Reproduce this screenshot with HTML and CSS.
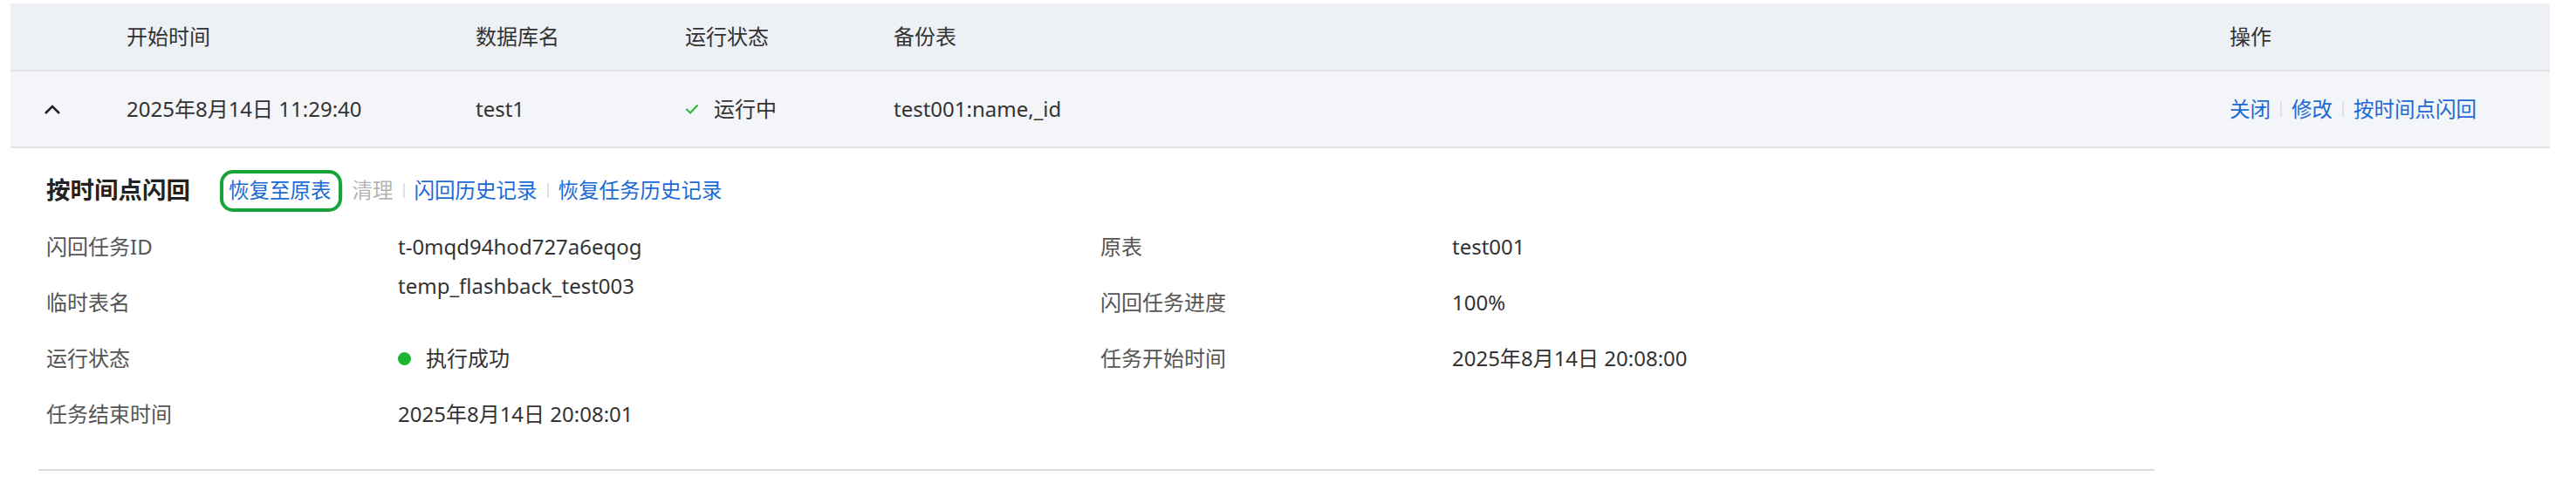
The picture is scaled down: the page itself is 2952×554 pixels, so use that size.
FILE: index.html
```html
<!DOCTYPE html>
<html>
<head>
  <link rel="stylesheet" href="styles.css">
</head>
<body>
  <div class="task-table">
    <div class="row head">
      <div class="cell"></div>
      <div class="cell">开始时间</div>
      <div class="cell">数据库名</div>
      <div class="cell">运行状态</div>
      <div class="cell">备份表</div>
      <div class="cell">操作</div>
    </div>
    <div class="row body">
      <div class="cell toggle">
        <svg width="20" height="12" viewBox="0 0 20 12"><polyline points="2,11 10,3 18,11" fill="none" stroke="#222" stroke-width="2.6"/></svg>
      </div>
      <div class="cell">2025年8月14日 11:29:40</div>
      <div class="cell">test1</div>
      <div class="cell status">
        <svg width="16" height="12" viewBox="0 0 16 12"><polyline points="1.5,6 6,10.5 14.5,1.5" fill="none" stroke="#2bb534" stroke-width="2"/></svg>
        运行中
      </div>
      <div class="cell">test001:name,_id</div>
      <div class="cell links">
        <a>关闭</a><span class="sep"></span><a>修改</a><span class="sep"></span><a>按时间点闪回</a>
      </div>
    </div>
  </div>

  <div class="detail">
    <div class="detail-title">
      <h3>按时间点闪回</h3>
      <div class="links">
        <a class="marked">恢复至原表</a><span class="sep"></span><a class="disabled">清理</a><span class="sep"></span><a>闪回历史记录</a><span class="sep"></span><a>恢复任务历史记录</a>
      </div>
    </div>
    <div class="info">
      <div class="label">闪回任务ID</div>
      <div class="value">t-0mqd94hod727a6eqog</div>
      <div class="label">原表</div>
      <div class="value">test001</div>

      <div class="label">临时表名</div>
      <div class="value raised">temp_flashback_test003</div>
      <div class="label">闪回任务进度</div>
      <div class="value">100%</div>

      <div class="label">运行状态</div>
      <div class="value"><span class="dot"></span>执行成功</div>
      <div class="label">任务开始时间</div>
      <div class="value">2025年8月14日 20:08:00</div>

      <div class="label">任务结束时间</div>
      <div class="value">2025年8月14日 20:08:01</div>
    </div>
  </div>
</body>
</html>
```

FILE: styles.css
```css
body {
  margin: 0;
  padding: 4px 0 0 12px;
  background: #fff;
  font-family: "Noto Sans", "Noto Sans CJK SC", sans-serif;
  font-size: 24px;
  color: #333;
}
.task-table {
  width: 2910px;
}
.row {
  display: grid;
  grid-template-columns: 133px 400px 240px 239px 1fr 367px;
  align-items: center;
  border-bottom: 2px solid #e1e2e6;
}
.row.head {
  height: 76px;
  background: #edf0f5;
}
.row.body {
  height: 86px;
  background: #f4f5f8;
}
.cell {
  line-height: 32px;
  white-space: nowrap;
}
.toggle {
  padding-left: 38px;
  display: flex;
  align-items: center;
}
.status {
  display: flex;
  align-items: center;
  gap: 17px;
}
.links {
  display: flex;
  align-items: center;
  font-size: 23.5px;
}
.links a {
  color: #1a6ad6;
  cursor: pointer;
}
.links a.disabled {
  color: #b4b4b4;
}
.sep {
  width: 2px;
  height: 17px;
  background: #e0e0e0;
  margin: 0 11px;
}
.detail {
  margin-left: 32px;
  width: 2425px;
  padding: 28px 0 31px 9px;
  box-sizing: border-box;
  border-bottom: 2px solid #dcdcdc;
}
.detail-title {
  display: flex;
  align-items: center;
  height: 40px;
  margin-bottom: 13px;
}
.detail-title h3 {
  margin: 0 44px 0 0;
  font-size: 27.5px;
  font-weight: 700;
  color: #222;
  line-height: 40px;
}
.detail-title .links {
  line-height: 32px;
}
.marked {
  position: relative;
}
.marked::after {
  content: "";
  position: absolute;
  left: -10px;
  right: -12px;
  top: -7px;
  bottom: -9px;
  border: 4px solid #18a338;
  border-radius: 15px;
}
.info {
  display: grid;
  grid-template-columns: 403px 805px 403px 1fr;
  grid-auto-rows: 64px;
  align-items: center;
  line-height: 32px;
}
.label {
  color: #555;
}
.value {
  color: #333;
  display: flex;
  align-items: center;
}
.value.raised {
  align-self: start;
  margin-top: -3px;
}
.dot {
  width: 15px;
  height: 15px;
  border-radius: 50%;
  background: #1fb532;
  margin-right: 17px;
}
```
